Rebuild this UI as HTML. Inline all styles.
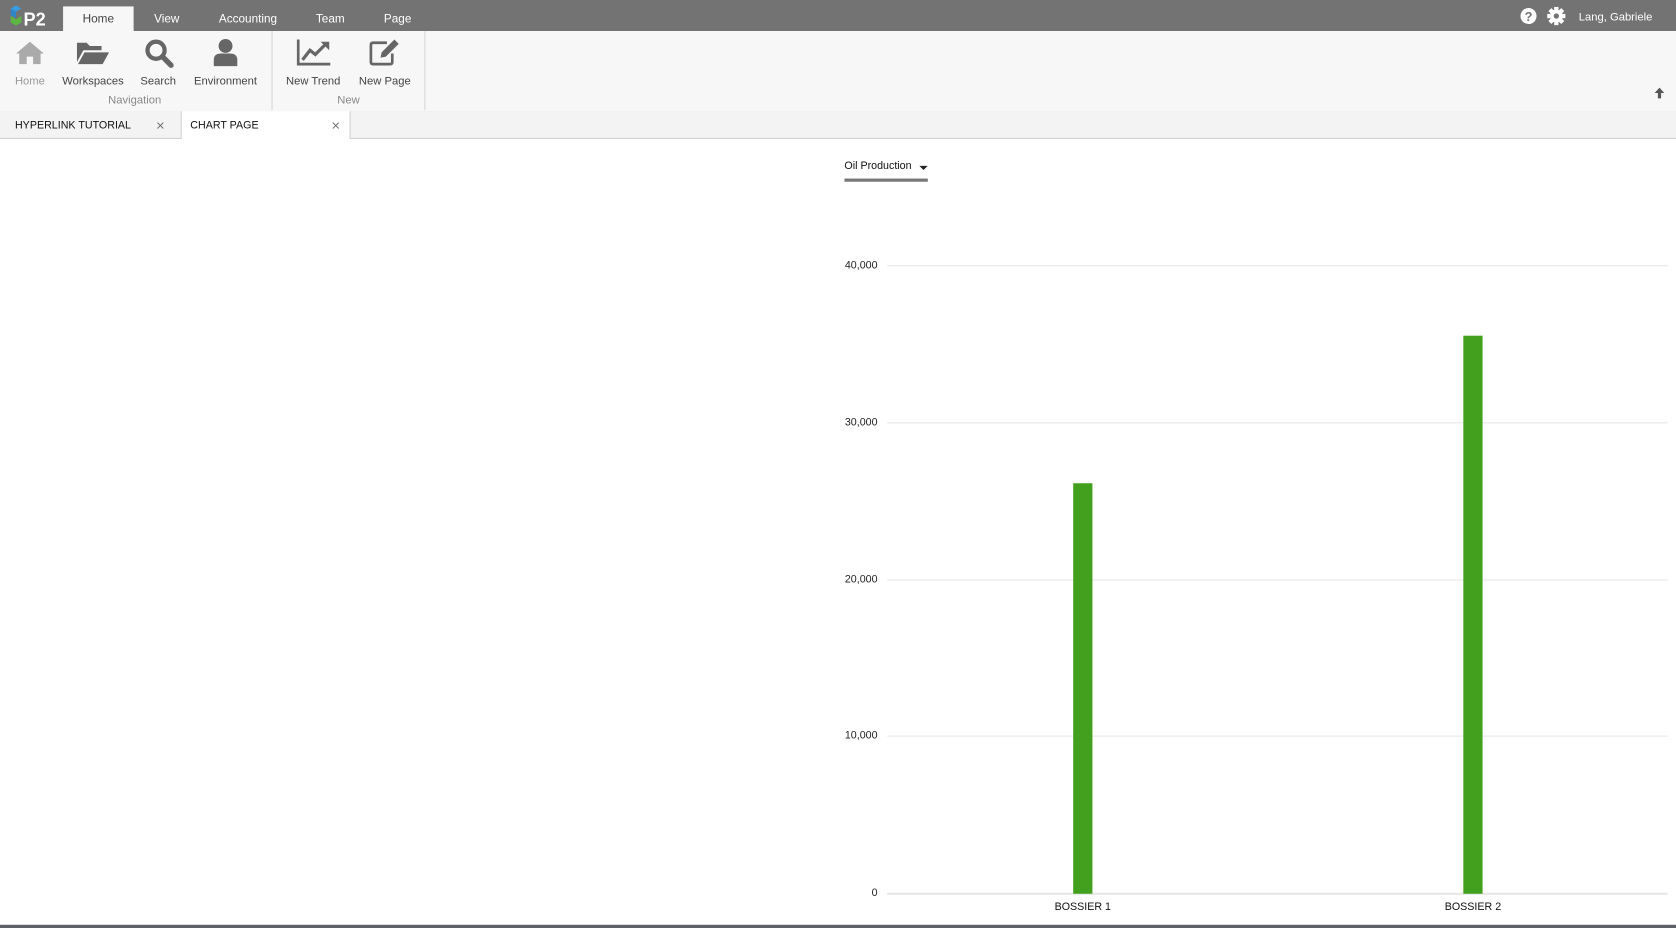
<!DOCTYPE html>
<html><head><meta charset="utf-8">
<style>
html,body{margin:0;padding:0;width:1676px;height:928px;overflow:hidden;background:#fff;font-family:"Liberation Sans",sans-serif;}
#w{position:absolute;left:0;top:0;width:1568px;height:868px;transform:scale(1.0689,1.0691);transform-origin:0 0;}
.a{position:absolute;white-space:nowrap;}
.top{position:absolute;left:0;top:0;width:1568px;height:29px;background:#737373;}
.tt{position:absolute;top:12px;font-size:11px;color:#fff;transform:translateX(-50%);}
.rib{position:absolute;left:0;top:29px;width:1568px;height:75px;background:#f7f7f7;border-bottom:1px solid #e0e0e0;}
.lbl{position:absolute;top:70px;font-size:10.5px;color:#444;transform:translateX(-50%);}
.grp{position:absolute;top:88px;font-size:10.5px;color:#888;transform:translateX(-50%);}
.sep{position:absolute;top:29px;width:1px;height:74px;background:#d6d6d6;}
.ylab{position:absolute;right:747px;font-size:10px;color:#222;}
.grid{position:absolute;left:830px;width:730px;height:1px;background:#e6e6e6;}
</style></head><body>
<div id="w">
<div class="top"></div>
<svg class="a" style="left:8px;top:5px" width="40" height="22" viewBox="0 0 40 22">
<polygon points="2,3 7,0 12,3 7,6" fill="#3a9be0"/><polygon points="2,3 7,6 7,12 2,9" fill="#2f86c8"/>
<polygon points="2,10 7,13 12,10 12,16 7,19 2,16" fill="#5db542"/>
<text x="14" y="19" font-family="Liberation Sans" font-weight="bold" font-size="17" fill="#fff">P2</text></svg>
<div class="a" style="left:59px;top:6px;width:66px;height:23px;background:#f7f7f7"></div>
<div class="tt" style="left:92px;color:#444">Home</div>
<div class="tt" style="left:156px">View</div>
<div class="tt" style="left:232px">Accounting</div>
<div class="tt" style="left:309px">Team</div>
<div class="tt" style="left:372px">Page</div>
<svg class="a" style="left:1422px;top:7px" width="16" height="16" viewBox="0 0 16 16"><circle cx="8" cy="8" r="7.5" fill="#fff"/><text x="8" y="12.5" text-anchor="middle" font-weight="bold" font-size="12" fill="#737373" font-family="Liberation Sans">?</text></svg>
<svg class="a" style="left:1447px;top:6px" width="18" height="18" viewBox="0 0 18 18"><g fill="#fff"><circle cx="9" cy="9" r="6"/><rect x="7" y="0.5" width="4" height="17"/><rect x="0.5" y="7" width="17" height="4"/><rect x="7" y="0.5" width="4" height="17" transform="rotate(45 9 9)"/><rect x="7" y="0.5" width="4" height="17" transform="rotate(-45 9 9)"/></g><circle cx="9" cy="9" r="2.5" fill="#737373"/></svg>
<div class="a" style="left:1477px;top:10px;font-size:10.5px;color:#fff">Lang, Gabriele</div>

<div class="rib"></div>
<svg class="a" style="left:14px;top:37px" width="28" height="24" viewBox="0 0 28 24"><path d="M14 2 L27 13 L24 13 L24 23 L17 23 L17 16 L11 16 L11 23 L4 23 L4 13 L1 13 Z" fill="#aaa"/></svg>
<svg class="a" style="left:71px;top:37px" width="32" height="24" viewBox="0 0 32 24"><path d="M1 3 L10 3 L13 6 L24 6 L24 10 L7 10 L1 21 Z" fill="#666"/><path d="M8 12 L31 12 L25 23 L2 23 Z" fill="#666"/></svg>
<svg class="a" style="left:135px;top:36px" width="28" height="28" viewBox="0 0 28 28"><circle cx="11" cy="11" r="8" fill="none" stroke="#666" stroke-width="4"/><path d="M17 17 L25 25" stroke="#666" stroke-width="5" stroke-linecap="round"/></svg>
<svg class="a" style="left:199px;top:36px" width="24" height="26" viewBox="0 0 24 26"><circle cx="12" cy="7" r="6.5" fill="#666"/><path d="M1 26 L1 20 Q1 14 8 14 L16 14 Q23 14 23 20 L23 26 Z" fill="#666"/></svg>
<svg class="a" style="left:277px;top:36px" width="34" height="26" viewBox="0 0 34 26"><path d="M2 1 L2 24 L32 24" fill="none" stroke="#666" stroke-width="2.5"/><path d="M6 20 L13 11 L18 15 L27 6" fill="none" stroke="#666" stroke-width="3"/><path d="M23 3 L31 3 L31 11 Z" fill="#666"/></svg>
<svg class="a" style="left:344px;top:35px" width="32" height="28" viewBox="0 0 32 28"><path d="M18 5 L5 5 Q3 5 3 7 L3 23 Q3 25 5 25 L21 25 Q23 25 23 23 L23 15" fill="none" stroke="#666" stroke-width="2.5"/><path d="M12 19 L13 14 L25 2 L29 6 L17 18 Z" fill="#666"/></svg>
<div class="lbl" style="left:28px;color:#999">Home</div>
<div class="lbl" style="left:87px">Workspaces</div>
<div class="lbl" style="left:148px">Search</div>
<div class="lbl" style="left:211px">Environment</div>
<div class="lbl" style="left:293px">New Trend</div>
<div class="lbl" style="left:360px">New Page</div>
<div class="grp" style="left:126px">Navigation</div>
<div class="grp" style="left:326px">New</div>
<div class="sep" style="left:254px"></div>
<div class="sep" style="left:397px"></div>
<svg class="a" style="left:1547px;top:82px" width="11" height="11" viewBox="0 0 11 11"><path d="M5.5 0 L10 5 L7 5 L7 10 L4 10 L4 5 L1 5 Z" fill="#555"/></svg>

<div class="a" style="left:0;top:104px;width:1568px;height:25px;background:#f3f3f3;border-bottom:1px solid #d0d0d0"></div>
<div class="a" style="left:169px;top:104px;width:157px;height:26px;background:#fff;border-left:1px solid #d0d0d0;border-right:1px solid #d0d0d0"></div>
<div class="a" style="left:14px;top:112px;font-size:10px;color:#111">HYPERLINK TUTORIAL</div>
<div class="a" style="left:146px;top:109px;font-size:14px;color:#777">×</div>
<div class="a" style="left:178px;top:112px;font-size:10px;color:#111">CHART PAGE</div>
<div class="a" style="left:310px;top:109px;font-size:14px;color:#777">×</div>

<div class="a" style="left:790px;top:150px;font-size:10px;color:#111">Oil Production</div>
<svg class="a" style="left:860px;top:155px" width="8" height="5"><path d="M0 0 L8 0 L4 4 Z" fill="#222"/></svg>
<div class="a" style="left:790px;top:167px;width:78px;height:3px;background:#777"></div>

<div class="grid" style="top:248px"></div>
<div class="grid" style="top:395px"></div>
<div class="grid" style="top:542px"></div>
<div class="grid" style="top:688px"></div>
<div class="grid" style="top:835px;height:2px"></div>
<div class="ylab" style="top:243px">40,000</div>
<div class="ylab" style="top:390px">30,000</div>
<div class="ylab" style="top:537px">20,000</div>
<div class="ylab" style="top:683px">10,000</div>
<div class="ylab" style="top:830px">0</div>
<div class="a" style="left:1004px;top:452px;width:18px;height:384px;background:#43a01e"></div>
<div class="a" style="left:1369px;top:314px;width:18px;height:522px;background:#43a01e"></div>
<div class="a" style="left:1013px;top:843px;font-size:10px;color:#111;transform:translateX(-50%)">BOSSIER 1</div>
<div class="a" style="left:1378px;top:843px;font-size:10px;color:#111;transform:translateX(-50%)">BOSSIER 2</div>
<div class="a" style="left:0;top:865px;width:1568px;height:3px;background:#5a6066"></div>
</div>
</body></html>
